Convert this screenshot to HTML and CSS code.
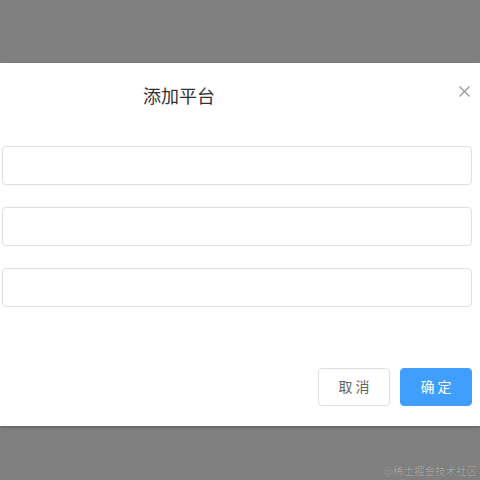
FILE: index.html
```html
<!DOCTYPE html>
<html lang="zh">
<head>
<meta charset="utf-8">
<title>添加平台</title>
<link rel="stylesheet" href="styles.css">
</head>
<body>
<div class="overlay">
  <div class="dialog">
    <div class="dialog-header">
      <span class="dialog-title">添加平台</span>
      <button class="dialog-close" aria-label="关闭">
        <svg width="11" height="11" viewBox="0 0 11 11"><path d="M0.5 0.5 L10.5 10.5 M10.5 0.5 L0.5 10.5" stroke="#909399" stroke-width="1.1" fill="none"/></svg>
      </button>
    </div>
    <div class="dialog-body">
      <input class="input" type="text">
      <input class="input" type="text">
      <input class="input" type="text">
    </div>
    <div class="dialog-footer">
      <button class="btn btn-default">取 消</button>
      <button class="btn btn-primary">确 定</button>
    </div>
  </div>
  <div class="watermark">@稀土掘金技术社区</div>
</div>
</body>
</html>
```
FILE: styles.css
```css
html, body {
  margin: 0;
  padding: 0;
  height: 100%;
}
body {
  background: #7f807f;
  font-family: "Noto Sans CJK SC", "Noto Sans", "Liberation Sans", sans-serif;
}
.overlay {
  display: flex;
  flex-direction: column;
  padding-top: 63px;
}
.dialog {
  background: #fff;
  box-shadow: 0 1px 3px rgba(0, 0, 0, 0.3);
  height: 363px;
  box-sizing: border-box;
  display: flex;
  flex-direction: column;
  padding: 0 8px 20px 2px;
}
.dialog-header {
  display: flex;
  align-items: flex-start;
  justify-content: space-between;
  padding-top: 20px;
  height: 24px;
}
.dialog-title {
  margin-left: 141px;
  font-size: 18px;
  line-height: 24px;
  color: #303133;
}
.dialog-close {
  border: 0;
  background: none;
  padding: 0;
  margin-top: 3px;
  margin-right: 2px;
  width: 11px;
  height: 11px;
  display: flex;
  cursor: pointer;
}
.dialog-body {
  display: flex;
  flex-direction: column;
  gap: 22px;
  margin-top: 39px;
}
.input {
  display: block;
  height: 39px;
  box-sizing: border-box;
  border: 1px solid #dcdfe6;
  border-radius: 4px;
  background: #fff;
  width: 100%;
  padding: 0 15px;
  font-size: 14px;
  outline: none;
}
.dialog-footer {
  margin-top: auto;
  display: flex;
  justify-content: flex-end;
  gap: 10px;
}
.btn {
  width: 72px;
  height: 38px;
  box-sizing: border-box;
  border-radius: 4px;
  font-family: "Noto Sans CJK SC", sans-serif;
  font-size: 14px;
  line-height: 1;
  padding: 0 0 2px;
  cursor: pointer;
}
.btn-default {
  background: #fff;
  border: 1px solid #dcdfe6;
  color: #606266;
}
.btn-primary {
  background: #409eff;
  border: 1px solid #409eff;
  color: #fff;
}
.watermark {
  align-self: flex-end;
  margin-top: 38px;
  margin-right: 3px;
  font-size: 10.5px;
  line-height: 14px;
  color: #a8a9a8;
  text-shadow: 0 0 1px rgba(0, 0, 0, 0.35);
}
```
